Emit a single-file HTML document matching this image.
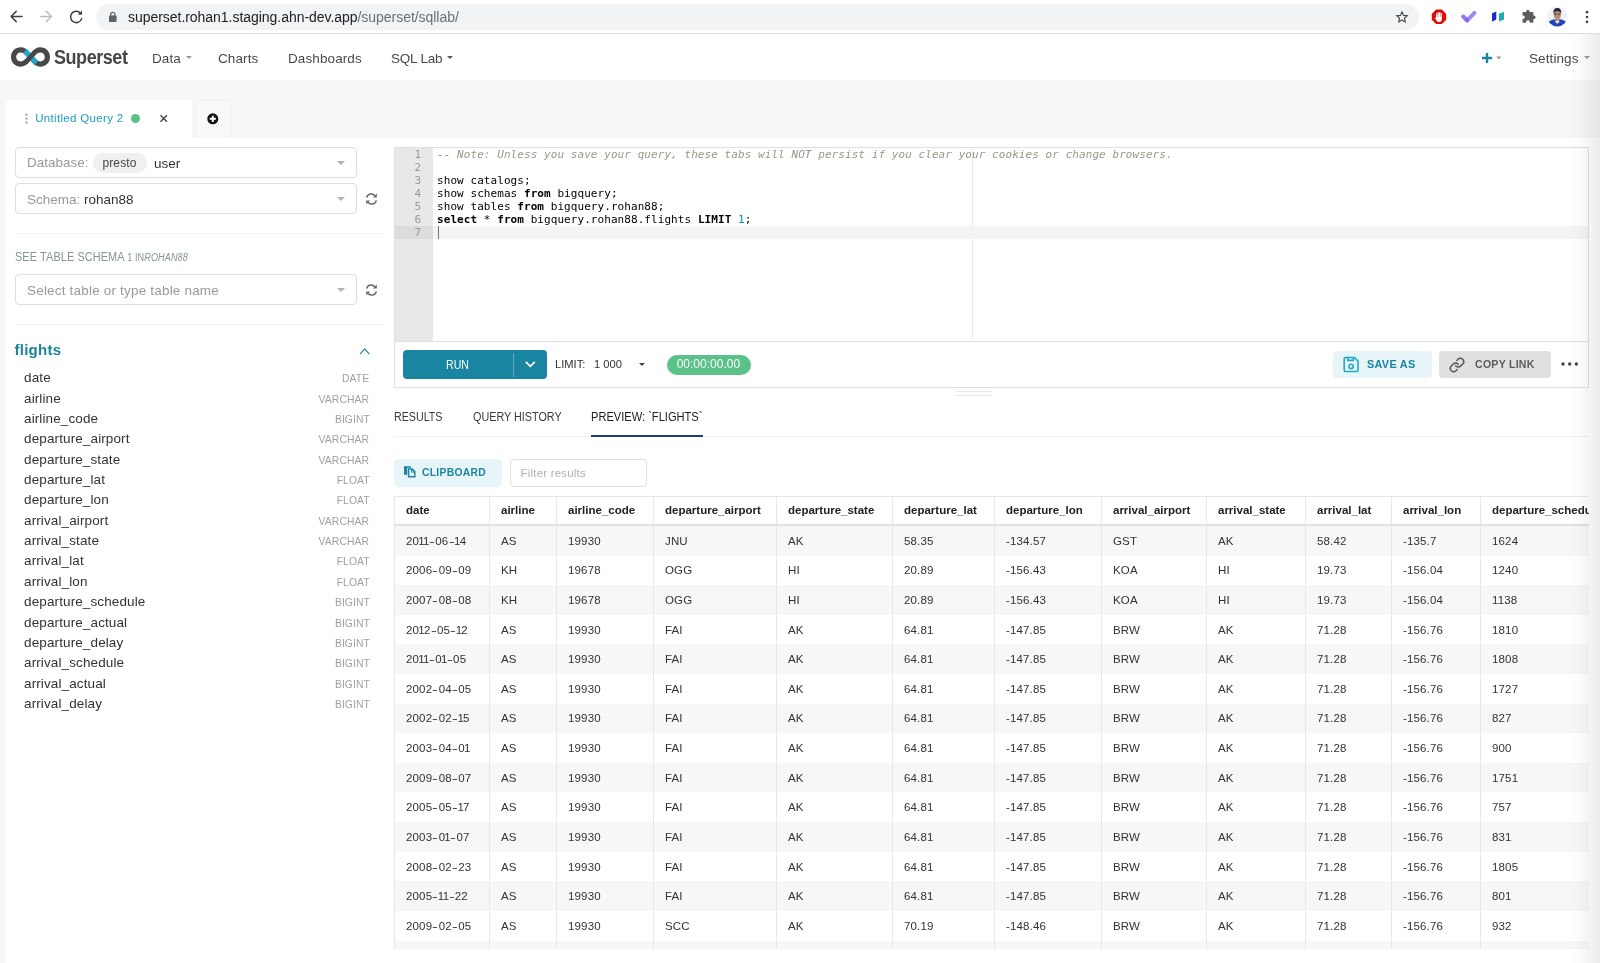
<!DOCTYPE html>
<html lang="en"><head><meta charset="utf-8"><title>Superset</title>
<style>
*{box-sizing:border-box;margin:0;padding:0}
html,body{width:1600px;height:963px;overflow:hidden;background:#fff}
body{font-family:"Liberation Sans",sans-serif;color:#323232;position:relative;font-size:14px}
.abs{position:absolute}
/* browser chrome */
#chrome{position:absolute;left:0;top:0;width:1600px;height:34px;background:#fff;border-bottom:1px solid #e0e0e0}
#urlpill{position:absolute;left:96px;top:4px;width:1322.5px;height:25.5px;border-radius:13px;background:#f1f3f4}
#url{position:absolute;left:128px;top:9px;font-size:14px;line-height:17px;color:#202124;white-space:nowrap;letter-spacing:-0.04px}
#url span{color:#6b6f73}
/* nav */
#nav{position:absolute;left:0;top:34px;width:1600px;height:46px;background:#fff}
.navitem{position:absolute;top:16px;font-size:13.5px;line-height:17px;color:#484848;white-space:nowrap;letter-spacing:0.1px}
#logotext{position:absolute;left:54px;top:10px;font-size:20px;line-height:26px;font-weight:bold;color:#464646;letter-spacing:-0.5px;transform-origin:0 0;transform:scaleX(0.9)}
.caret{display:inline-block;width:0;height:0;border-left:3px solid transparent;border-right:3px solid transparent;border-top:3px solid #555;vertical-align:middle;margin-left:5px;position:relative;top:-1.5px;letter-spacing:0}
/* gray band */
#band{position:absolute;left:0;top:80px;width:1600px;height:883px;background:#f7f7f7}
#content{position:absolute;left:6px;top:138px;width:1594px;height:825px;background:#fff}
#tab1{position:absolute;left:6px;top:100px;width:186px;height:38px;background:#fff;border-radius:3px 3px 0 0}
#tab2{position:absolute;left:194.5px;top:100px;width:36px;height:37px;background:#f9f9f9;border:1px solid #f0f0f0;border-bottom:none;border-radius:3px 3px 0 0}
#tabtitle{position:absolute;left:35.2px;top:111.3px;font-size:11.5px;line-height:15px;color:#1a9cc4;white-space:nowrap;letter-spacing:0.33px}
/* sidebar */
.sel{position:absolute;left:15px;width:342px;height:31px;border:1px solid #dddddd;border-radius:4px;background:#fff}
.sel .lbl{position:absolute;left:11px;top:6.5px;font-size:13.5px;line-height:17px;color:#999;white-space:nowrap;letter-spacing:0px}
.sel .lbl b{font-weight:normal;color:#323232}
.sel .arr{position:absolute;right:11px;top:13px;width:0;height:0;border-left:4px solid transparent;border-right:4px solid transparent;border-top:4px solid #b2b2b2}
.hr{position:absolute;left:15px;width:370px;height:1px;background:#f1f1f1}
.scol{position:absolute;left:24px;width:346px;height:20px;font-size:13.5px;line-height:16px;white-space:nowrap}
.scol .n{position:absolute;left:0;top:1px;color:#323232;letter-spacing:0.12px}
.scol .t{position:absolute;right:0.5px;top:1px;color:#a0a0a0;font-size:11.5px;letter-spacing:0.1px;transform-origin:100% 50%;transform:scaleX(0.9)}
/* editor */
#editor{position:absolute;left:394px;top:147px;width:1195px;height:195px;background:#fff;border:1px solid #e0e0e0}
#gutter{position:absolute;left:0;top:0;width:38px;height:193px;background:#e8e8e8}
#active{position:absolute;left:0;top:78px;width:1193px;height:13px;background:#f4f4f4}
#gactive{position:absolute;left:0;top:78px;width:38px;height:13px;background:#dcdcdc}
#pm{position:absolute;left:577px;top:0;width:1px;height:192px;background:#e8e8e8}
.ln{position:absolute;left:0;width:26px;text-align:right;font-family:"DejaVu Sans Mono","Liberation Mono",monospace;font-size:11px;line-height:13px;color:#999}
.cl{position:absolute;left:42px;font-family:"DejaVu Sans Mono","Liberation Mono",monospace;font-size:11px;line-height:13px;color:#000;white-space:pre;letter-spacing:0.065px}
.cl b{font-weight:bold}
.cl i{color:#999988;font-style:italic}
.cl em{color:#009999;font-style:normal}
#toolbar{position:absolute;left:394px;top:342px;width:1195px;height:46px;background:#fff;border:1px solid #e0e0e0;border-top:none}
#run{position:absolute;left:7.5px;top:8px;width:144.5px;height:29px;background:#1a85a0;border-radius:4px;color:#fff}
#run .t{position:absolute;left:43px;top:8px;font-size:12px;line-height:15px;letter-spacing:0;transform-origin:0 50%;transform:scaleX(0.885)}
#run .sep{position:absolute;left:110.5px;top:3px;width:1px;height:24px;background:#5fa9bd}
/* result tabs */
.rtab{position:absolute;top:410px;font-size:12px;line-height:14px;color:#3a3a3a;white-space:nowrap;letter-spacing:0;transform-origin:0 50%;transform:scaleX(0.89)}
#rline{position:absolute;left:395px;top:436px;width:1194px;height:1px;background:#f0f0f0}
#runder{position:absolute;left:591px;top:435px;width:112px;height:2px;background:#253b7a}
#clip{position:absolute;left:394px;top:459px;width:108px;height:27.5px;background:#e7f4f8;border-radius:4px}
#clip .t{position:absolute;left:28.3px;top:5.6px;font-size:11.5px;line-height:14px;color:#1a85a0;font-weight:bold;letter-spacing:0.3px;transform-origin:0 50%;transform:scaleX(0.9)}
#filter{position:absolute;left:510px;top:459px;width:137px;height:28px;border:1px solid #dedede;border-radius:4px;background:#fff}
#filter .t{position:absolute;left:9.5px;top:6px;font-size:11.5px;line-height:14px;color:#b0b0b0;letter-spacing:0.2px}
/* table */
#tblwrap{position:absolute;left:394px;top:496px;width:1195px;height:453px;overflow:hidden;background:#fff}
table{border-collapse:separate;border-spacing:0;table-layout:fixed;width:1306px;font-size:11.5px;color:#323232}
th,td{text-align:left;padding:0 0 0 11px;white-space:nowrap;overflow:hidden;border-left:1px solid #e8e8e8;letter-spacing:0.15px}
th{height:30px;padding-bottom:1px;font-weight:bold;border-top:1px solid #e8e8e8;border-bottom:2px solid #e2e2e2;color:#222;letter-spacing:0}
td{height:29.62px}
tr:nth-child(odd) td{background:#f7f7f7}
/* edges */
#redge{position:absolute;left:1568px;top:34px;width:32px;height:929px;background:linear-gradient(to right,rgba(0,0,0,0),rgba(0,0,0,0.018) 40%,rgba(0,0,0,0.075))}

.sel .pill{position:absolute;left:76.5px;top:5px;width:54px;height:20px;border-radius:10px;background:#f0f0f0}
.sel .pill span{position:absolute;left:10px;top:3px;font-size:12px;line-height:14px;color:#444;letter-spacing:0.1px}
.sel .val{position:absolute;left:138px;top:7px;font-size:13.5px;line-height:17px;color:#323232;letter-spacing:0px}
#seetbl{position:absolute;left:15px;top:249.5px;font-size:12px;line-height:14px;color:#879399;white-space:nowrap;letter-spacing:0.1px;transform-origin:0 50%;transform:scaleX(0.91)}
#seetbl small{font-size:10px;letter-spacing:0.1px}
#flights{position:absolute;left:14.5px;top:341px;font-size:15px;line-height:18px;font-weight:bold;color:#1a85a0;letter-spacing:0.25px}
#cursor{position:absolute;left:43px;top:78px;width:1px;height:13px;background:#777}
#limit,#limitv{position:absolute;top:14.5px;font-size:11.5px;line-height:14px;color:#323232;white-space:nowrap;letter-spacing:0;transform-origin:0 50%;transform:scaleX(0.97)}
#limit{left:159.5px}#limitv{left:198.500px}
#timer{position:absolute;left:271.7px;top:12.5px;width:84.5px;height:20px;border-radius:10px;background:#5ac189}
#timer span{position:absolute;left:10px;top:2.5px;font-size:12px;line-height:14px;color:#fff;letter-spacing:0;white-space:nowrap}
#saveas{position:absolute;left:937.5px;top:9px;width:99px;height:27px;border-radius:4px;background:#e7f4f8}
#saveas .t{position:absolute;left:34.7px;top:5.7px;font-size:11.5px;line-height:14px;font-weight:bold;color:#1a85a0;letter-spacing:0.3px;white-space:nowrap;transform-origin:0 50%;transform:scaleX(0.945)}
#copylink{position:absolute;left:1044px;top:9px;width:112px;height:27px;border-radius:4px;background:#e0e0e0}
#copylink .t{position:absolute;left:35.5px;top:5.7px;font-size:11.5px;line-height:14px;font-weight:bold;color:#5a5a5a;letter-spacing:0.3px;white-space:nowrap;transform-origin:0 50%;transform:scaleX(0.916)}
#handle{position:absolute;left:956px;top:390.500px;width:35px;height:5px;border-top:1px solid #e6e6e6;border-bottom:1px solid #e6e6e6}

#lcaret{position:absolute;left:243.5px;top:21px;width:0;height:0;border-left:3px solid transparent;border-right:3px solid transparent;border-top:3.5px solid #444}

#root{position:absolute;left:0;top:0;width:1600px;height:963px;will-change:transform;transform:translateZ(0)}
td u{text-decoration:none;display:inline-block;transform:scaleX(1.5);margin:0 1.25px}
td s{text-decoration:none;margin:0 -0.87px}

</style></head>
<body>
<div id="root">
<div id="chrome">
  <div id="urlpill"></div>
  <svg class="abs" style="left:8px;top:8px" width="80" height="18" viewBox="0 0 80 18" fill="none" stroke-linecap="round" stroke-linejoin="round">
    <path d="M14 8.5H3.3M8.2 3.4L3.1 8.5l5.1 5.1" stroke="#3c4043" stroke-width="1.5"/>
    <path d="M32.5 8.5h10.7M38.3 3.4l5.1 5.1-5.1 5.1" stroke="#bdc1c6" stroke-width="1.5"/>
    <path d="M72.6 5.2A5.7 5.7 0 1 0 73.7 10.6" stroke="#3c4043" stroke-width="1.5"/>
    <path d="M74 2.500v4.200h-4.200z" fill="#3c4043" stroke="none"/>
  </svg>
  <svg class="abs" style="left:108px;top:11px" width="10" height="12" viewBox="0 0 10 12">
    <rect x="1" y="4.6" width="7.6" height="6.4" rx="0.9" fill="#5f6368"/>
    <path d="M2.7 5V3.4a2.1 2.1 0 0 1 4.2 0V5" fill="none" stroke="#5f6368" stroke-width="1.3"/>
  </svg>
  <div id="url">superset.rohan1.staging.ahn-dev.app<span>/superset/sqllab/</span></div>
  <!-- star -->
  <svg class="abs" style="left:1395px;top:9.800px" width="14" height="14" viewBox="0 0 16 16"><path d="M8 2.2l1.75 3.95 4.25.4-3.2 2.85.95 4.2L8 11.4l-3.75 2.2.95-4.2L2 6.55l4.25-.4z" fill="none" stroke="#44474a" stroke-width="1.25" stroke-linejoin="miter"/></svg>
  <!-- adblock -->
  <svg class="abs" style="left:1431px;top:9px" width="16" height="16" viewBox="0 0 16 16"><path d="M5.100.600h5.800L15.200 4.900v5.800L10.900 15H5.100L.800 10.700V4.900z" fill="#e00b0b"/><g fill="#fff"><rect x="5.100" y="4.300" width="1.250" height="5" rx=".600"/><rect x="6.600" y="3.200" width="1.250" height="6" rx=".600"/><rect x="8.100" y="3" width="1.250" height="6" rx=".600"/><rect x="9.600" y="3.900" width="1.250" height="5.500" rx=".600"/><path d="M5.100 8h5.750v2.300a2.800 2.800 0 0 1-5.200 1.400L3.900 8.900q.500-.900 1.200-.200z"/></g></svg>
  <!-- purple check -->
  <svg class="abs" style="left:1460px;top:9px" width="18" height="15" viewBox="0 0 18 15" fill="none" stroke-linecap="round"><path d="M7.200 11.300L14.500 3.900" stroke="#a088f7" stroke-width="4"/><path d="M3.200 7.500L7 11.300" stroke="#7d5ff0" stroke-width="4" opacity=".85"/></svg>
  <!-- books -->
  <svg class="abs" style="left:1491px;top:11px" width="15" height="12" viewBox="0 0 15 12"><path d="M1 2.300L5.300.600v7.800L1 10.700z" fill="#1d2bd4"/><path d="M8 2.700L13 .800v7.800L8 10.600z" fill="#17b3a6"/></svg>
  <!-- puzzle -->
  <svg class="abs" style="left:1520px;top:9px" width="16" height="15" viewBox="0 0 16 15"><path d="M6.200 3V2.400a1.700 1.700 0 0 1 3.400 0V3h3a.800.800 0 0 1 .800.800v2.600h.500a1.750 1.750 0 0 1 0 3.500h-.500v3a.800.800 0 0 1-.800.800h-2.900v-.600a1.800 1.800 0 0 0-3.600 0v.600H3.300a.800.800 0 0 1-.800-.800V10h.500a1.800 1.800 0 0 0 0-3.600h-.500V3.800A.8.8 0 0 1 3.300 3z" fill="#5a5d61"/></svg>
  <!-- avatar -->
  <svg class="abs" style="left:1547px;top:6px" width="21" height="21" viewBox="0 0 21 21"><defs><clipPath id="av"><circle cx="10.300" cy="10.300" r="10.100"/></clipPath></defs><g clip-path="url(#av)"><rect width="21" height="21" fill="#eef2f6"/><ellipse cx="10.300" cy="21" rx="11.500" ry="8" fill="#2444b8"/><path d="M8.300 11.500h4v4.500l-2 1.700-2-1.700z" fill="#c39880"/><ellipse cx="10.300" cy="8.400" rx="3.600" ry="4.500" fill="#b98a72"/><path d="M6.300 7.600q-.400-5.600 4-5.600t4 5.600q-.900-2.700-4-2.600-3.100-.100-4 2.600z" fill="#2a2632"/><path d="M7 8.200h2.700M10.900 8.200h2.700" stroke="#3a3034" stroke-width="1"/><path d="M8 15.300l2.300 2.400 2.300-2.400" fill="#eef0f5"/></g></svg>
  <!-- menu dots -->
  <svg class="abs" style="left:1584px;top:9px" width="6" height="16" viewBox="0 0 6 16"><circle cx="3" cy="3.200" r="1.350" fill="#44474a"/><circle cx="3" cy="8" r="1.350" fill="#44474a"/><circle cx="3" cy="12.800" r="1.350" fill="#44474a"/></svg>
</div>
<div id="nav">
  <svg class="abs" style="left:11px;top:13px" width="39" height="20" viewBox="0 0 39 20">
    <path d="M9.700 0.300C4.200 0.300 0 4.400 0 10s4.200 9.700 9.700 9.700c3.600 0 6.300-1.800 9.800-5.900 3.500 4.100 6.200 5.900 9.800 5.900 5.500 0 9.700-4.100 9.700-9.700S34.800.300 29.300.300c-3.600 0-6.300 1.800-9.800 5.900C16 2.100 13.300.300 9.700.300zm0 5.300c2.100 0 3.900 1.300 6.400 4.400-2.500 3.100-4.300 4.400-6.400 4.400-2.600 0-4.500-1.900-4.500-4.400s1.900-4.400 4.500-4.400zm19.600 0c2.600 0 4.500 1.900 4.500 4.400s-1.900 4.400-4.500 4.400c-2.100 0-3.900-1.300-6.400-4.400 2.500-3.100 4.300-4.400 6.400-4.400z" fill="#484848"/>
    <path d="M15.7 2.1l4 4.2-3.4 4-4.300-4.400z" fill="#20a7c9"/>
    <path d="M22.9 9.6l4.300 4.500-3.600 3.900-4.200-4.400z" fill="#20a7c9"/>
  </svg>
  <div id="logotext">Superset</div>
  <div class="navitem" style="left:152px">Data<span class="caret" style="border-top-color:#999"></span></div>
  <div class="navitem" style="left:218px">Charts</div>
  <div class="navitem" style="left:288px">Dashboards</div>
  <div class="navitem" style="left:391px;letter-spacing:-0.2px">SQL Lab<span class="caret"></span></div>
  <svg class="abs" style="left:1481px;top:18px" width="22" height="12" viewBox="0 0 22 12"><path d="M6 1v10M1 6h10" stroke="#1a85a0" stroke-width="2.400"/><path d="M15.300 4.600h5l-2.500 3z" fill="#999"/></svg>
  <div class="navitem" style="left:1529px">Settings<span class="caret" style="border-top-color:#999"></span></div>
</div>
<div id="band"></div>
<div id="content"></div>
<div id="tab1"></div>
<div id="tab2"></div>
<svg class="abs" style="left:24px;top:113px" width="5" height="11" viewBox="0 0 5 11"><circle cx="2.400" cy="1.800" r="1.250" fill="#b0b0b0"/><circle cx="2.400" cy="5.600" r="1.250" fill="#b0b0b0"/><circle cx="2.400" cy="9.400" r="1.250" fill="#b0b0b0"/></svg>
<div id="tabtitle">Untitled Query 2</div>
<div class="abs" style="left:130.500px;top:113.600px;width:9.300px;height:9.300px;border-radius:50%;background:#5ac189"></div>
<svg class="abs" style="left:159px;top:114px" width="10" height="10" viewBox="0 0 10 10"><path d="M1.500 1.300l6.400 6.400M7.900 1.300L1.500 7.700" stroke="#444" stroke-width="1.400"/></svg>
<svg class="abs" style="left:207px;top:112.500px" width="12" height="12" viewBox="0 0 12 12"><circle cx="5.800" cy="5.800" r="5.500" fill="#111"/><path d="M5.800 2.700v6.200M2.700 5.800h6.200" stroke="#fff" stroke-width="1.900"/></svg>

<div class="sel" style="top:147.200px"><span class="lbl" style="top:6px">Database:</span><div class="pill"><span>presto</span></div><span class="val">user</span><div class="arr"></div></div>
<div class="sel" style="top:183.200px"><span class="lbl">Schema: <b>rohan88</b></span><div class="arr"></div></div>
<svg class="abs refresh" style="left:365px;top:193px" width="13" height="12" viewBox="0 0 13 12"><path d="M1.700 4.700A4.600 4.600 0 0 1 9.900 2.800M11.300 7.300A4.600 4.600 0 0 1 3.100 9.200" fill="none" stroke="#6a6a6a" stroke-width="1.500"/><path d="M11.800.600v3.900H7.900zM1.200 11.400V7.500h3.900z" fill="#6a6a6a"/></svg>
<div class="hr" style="top:233px"></div>
<div id="seetbl">SEE TABLE SCHEMA <small>1 IN<i>ROHAN88</i></small></div>
<div class="sel" style="top:274.200px"><span class="lbl" style="letter-spacing:0.19px;top:6.5px">Select table or type table name</span><div class="arr"></div></div>
<svg class="abs refresh" style="left:365px;top:284px" width="13" height="12" viewBox="0 0 13 12"><path d="M1.700 4.700A4.600 4.600 0 0 1 9.900 2.800M11.300 7.300A4.600 4.600 0 0 1 3.100 9.200" fill="none" stroke="#6a6a6a" stroke-width="1.500"/><path d="M11.800.600v3.900H7.900zM1.200 11.400V7.500h3.900z" fill="#6a6a6a"/></svg>
<div class="hr" style="top:324px"></div>
<div id="flights">flights</div>
<svg class="abs" style="left:359px;top:347px" width="12" height="9" viewBox="0 0 12 9"><path d="M1 7.200L5.700 1.800 10.400 7.200" fill="none" stroke="#1a85a0" stroke-width="1.100"/></svg>
<div id="schema">
<div class="scol" style="top:369.20px"><span class="n">date</span><span class="t">DATE</span></div>
<div class="scol" style="top:389.56px"><span class="n">airline</span><span class="t">VARCHAR</span></div>
<div class="scol" style="top:409.92px"><span class="n">airline_code</span><span class="t">BIGINT</span></div>
<div class="scol" style="top:430.28px"><span class="n">departure_airport</span><span class="t">VARCHAR</span></div>
<div class="scol" style="top:450.64px"><span class="n">departure_state</span><span class="t">VARCHAR</span></div>
<div class="scol" style="top:471.00px"><span class="n">departure_lat</span><span class="t">FLOAT</span></div>
<div class="scol" style="top:491.36px"><span class="n">departure_lon</span><span class="t">FLOAT</span></div>
<div class="scol" style="top:511.72px"><span class="n">arrival_airport</span><span class="t">VARCHAR</span></div>
<div class="scol" style="top:532.08px"><span class="n">arrival_state</span><span class="t">VARCHAR</span></div>
<div class="scol" style="top:552.44px"><span class="n">arrival_lat</span><span class="t">FLOAT</span></div>
<div class="scol" style="top:572.80px"><span class="n">arrival_lon</span><span class="t">FLOAT</span></div>
<div class="scol" style="top:593.16px"><span class="n">departure_schedule</span><span class="t">BIGINT</span></div>
<div class="scol" style="top:613.52px"><span class="n">departure_actual</span><span class="t">BIGINT</span></div>
<div class="scol" style="top:633.88px"><span class="n">departure_delay</span><span class="t">BIGINT</span></div>
<div class="scol" style="top:654.24px"><span class="n">arrival_schedule</span><span class="t">BIGINT</span></div>
<div class="scol" style="top:674.60px"><span class="n">arrival_actual</span><span class="t">BIGINT</span></div>
<div class="scol" style="top:694.96px"><span class="n">arrival_delay</span><span class="t">BIGINT</span></div>

</div>

<div id="editor">
  <div id="pm"></div>
  <div id="active"></div>
  <div id="gutter"></div>
  <div id="gactive"></div>
  <div id="cursor"></div>
<div class="ln" style="top:0px">1</div><div class="cl" style="top:0px"><i>-- Note: Unless you save your query, these tabs will NOT persist if you clear your cookies or change browsers.</i></div>
<div class="ln" style="top:13px">2</div><div class="cl" style="top:13px"></div>
<div class="ln" style="top:26px">3</div><div class="cl" style="top:26px">show catalogs;</div>
<div class="ln" style="top:39px">4</div><div class="cl" style="top:39px">show schemas <b>from</b> bigquery;</div>
<div class="ln" style="top:52px">5</div><div class="cl" style="top:52px">show tables <b>from</b> bigquery.rohan88;</div>
<div class="ln" style="top:65px">6</div><div class="cl" style="top:65px"><b>select</b> * <b>from</b> bigquery.rohan88.flights <b>LIMIT</b> <em>1</em>;</div>
<div class="ln" style="top:78px">7</div><div class="cl" style="top:78px"></div>

</div>
<div id="toolbar">
  <div id="run"><span class="t">RUN</span><div class="sep"></div>
    <svg class="abs" style="left:121px;top:10px" width="13" height="9" viewBox="0 0 13 9"><path d="M1.800 1.800l4.500 4.500 4.500-4.500" fill="none" stroke="#fff" stroke-width="1.800"/></svg>
  </div>
  <div id="limit">LIMIT:</div><div id="limitv">1 000</div>
  <div id="lcaret"></div>
  <div id="timer"><span>00:00:00.00</span></div>
  <div id="saveas"><svg class="abs" style="left:10px;top:5px" width="17" height="17" viewBox="0 0 17 17" fill="none" stroke="#20a7c9" stroke-width="1.600"><path d="M2.600 1.500h8.800l3.600 3.600v9a1.400 1.400 0 0 1-1.400 1.400H2.600a1.400 1.400 0 0 1-1.400-1.400V2.900a1.400 1.400 0 0 1 1.400-1.400z"/><path d="M4.800 1.600v2.800h5.600V1.600"/><circle cx="8.100" cy="10.400" r="2.200"/></svg><span class="t">SAVE AS</span></div>
  <div id="copylink"><svg class="abs" style="left:10.300px;top:5.600px" width="16" height="16" viewBox="0 0 24 24" fill="none" stroke="#555" stroke-width="2.200" stroke-linecap="round" stroke-linejoin="round"><path d="M10 13a5 5 0 0 0 7.540.540l3-3a5 5 0 0 0-7.070-7.070l-1.720 1.710"/><path d="M14 11a5 5 0 0 0-7.540-.540l-3 3a5 5 0 0 0 7.070 7.070l1.710-1.710"/></svg><span class="t">COPY LINK</span></div>
  <svg class="abs" style="left:1165px;top:19px" width="20" height="6" viewBox="0 0 20 6"><circle cx="3" cy="3" r="1.700" fill="#444"/><circle cx="9.700" cy="3" r="1.700" fill="#444"/><circle cx="16.300" cy="3" r="1.700" fill="#444"/></svg>
</div>
<div id="handle"></div>
<div class="rtab" style="left:394px">RESULTS</div>
<div class="rtab" style="left:472.500px;transform:scaleX(0.9)">QUERY HISTORY</div>
<div class="rtab" style="left:591px;color:#1c1c1c;transform:scaleX(0.925)">PREVIEW: `FLIGHTS`</div>
<div id="rline"></div>
<div id="runder"></div>
<div id="clip"><svg class="abs" style="left:8.500px;top:6.300px" width="13" height="13" viewBox="0 0 13 13"><path d="M1 1.200h7v1.500H4.200v7H1z" fill="#1a85a0"/><path d="M5.600 4h3.600l2.600 2.600v5.200H5.600z" fill="none" stroke="#1a85a0" stroke-width="1.500"/><path d="M8.700 4v3h3" fill="none" stroke="#1a85a0" stroke-width="1.100"/></svg><span class="t">CLIPBOARD</span></div>
<div id="filter"><span class="t">Filter results</span></div>
<div id="tblwrap">
<table><thead><tr><th style="width:95px">date</th><th style="width:67px">airline</th><th style="width:97px">airline_code</th><th style="width:123px">departure_airport</th><th style="width:116px">departure_state</th><th style="width:102px">departure_lat</th><th style="width:107px">departure_lon</th><th style="width:105px">arrival_airport</th><th style="width:99px">arrival_state</th><th style="width:86px">arrival_lat</th><th style="width:89px">arrival_lon</th><th style="width:220px">departure_schedule</th></tr></thead><tbody>
<tr><td>20<s>1</s><s>1</s><u>-</u>06<u>-</u><s>1</s>4</td><td>AS</td><td>19930</td><td>JNU</td><td>AK</td><td>58.35</td><td>-134.57</td><td>GST</td><td>AK</td><td>58.42</td><td>-135.7</td><td>1624</td></tr>
<tr><td>2006<u>-</u>09<u>-</u>09</td><td>KH</td><td>19678</td><td>OGG</td><td>HI</td><td>20.89</td><td>-156.43</td><td>KOA</td><td>HI</td><td>19.73</td><td>-156.04</td><td>1240</td></tr>
<tr><td>2007<u>-</u>08<u>-</u>08</td><td>KH</td><td>19678</td><td>OGG</td><td>HI</td><td>20.89</td><td>-156.43</td><td>KOA</td><td>HI</td><td>19.73</td><td>-156.04</td><td>1138</td></tr>
<tr><td>20<s>1</s>2<u>-</u>05<u>-</u><s>1</s>2</td><td>AS</td><td>19930</td><td>FAI</td><td>AK</td><td>64.81</td><td>-147.85</td><td>BRW</td><td>AK</td><td>71.28</td><td>-156.76</td><td>1810</td></tr>
<tr><td>20<s>1</s><s>1</s><u>-</u>0<s>1</s><u>-</u>05</td><td>AS</td><td>19930</td><td>FAI</td><td>AK</td><td>64.81</td><td>-147.85</td><td>BRW</td><td>AK</td><td>71.28</td><td>-156.76</td><td>1808</td></tr>
<tr><td>2002<u>-</u>04<u>-</u>05</td><td>AS</td><td>19930</td><td>FAI</td><td>AK</td><td>64.81</td><td>-147.85</td><td>BRW</td><td>AK</td><td>71.28</td><td>-156.76</td><td>1727</td></tr>
<tr><td>2002<u>-</u>02<u>-</u><s>1</s>5</td><td>AS</td><td>19930</td><td>FAI</td><td>AK</td><td>64.81</td><td>-147.85</td><td>BRW</td><td>AK</td><td>71.28</td><td>-156.76</td><td>827</td></tr>
<tr><td>2003<u>-</u>04<u>-</u>0<s>1</s></td><td>AS</td><td>19930</td><td>FAI</td><td>AK</td><td>64.81</td><td>-147.85</td><td>BRW</td><td>AK</td><td>71.28</td><td>-156.76</td><td>900</td></tr>
<tr><td>2009<u>-</u>08<u>-</u>07</td><td>AS</td><td>19930</td><td>FAI</td><td>AK</td><td>64.81</td><td>-147.85</td><td>BRW</td><td>AK</td><td>71.28</td><td>-156.76</td><td>1751</td></tr>
<tr><td>2005<u>-</u>05<u>-</u><s>1</s>7</td><td>AS</td><td>19930</td><td>FAI</td><td>AK</td><td>64.81</td><td>-147.85</td><td>BRW</td><td>AK</td><td>71.28</td><td>-156.76</td><td>757</td></tr>
<tr><td>2003<u>-</u>0<s>1</s><u>-</u>07</td><td>AS</td><td>19930</td><td>FAI</td><td>AK</td><td>64.81</td><td>-147.85</td><td>BRW</td><td>AK</td><td>71.28</td><td>-156.76</td><td>831</td></tr>
<tr><td>2008<u>-</u>02<u>-</u>23</td><td>AS</td><td>19930</td><td>FAI</td><td>AK</td><td>64.81</td><td>-147.85</td><td>BRW</td><td>AK</td><td>71.28</td><td>-156.76</td><td>1805</td></tr>
<tr><td>2005<u>-</u><s>1</s><s>1</s><u>-</u>22</td><td>AS</td><td>19930</td><td>FAI</td><td>AK</td><td>64.81</td><td>-147.85</td><td>BRW</td><td>AK</td><td>71.28</td><td>-156.76</td><td>801</td></tr>
<tr><td>2009<u>-</u>02<u>-</u>05</td><td>AS</td><td>19930</td><td>SCC</td><td>AK</td><td>70.19</td><td>-148.46</td><td>BRW</td><td>AK</td><td>71.28</td><td>-156.76</td><td>932</td></tr>
<tr><td></td><td></td><td></td><td></td><td></td><td></td><td></td><td></td><td></td><td></td><td></td><td></td></tr>

</tbody></table>
</div>
<div id="redge"></div>

</div>
</body></html>
